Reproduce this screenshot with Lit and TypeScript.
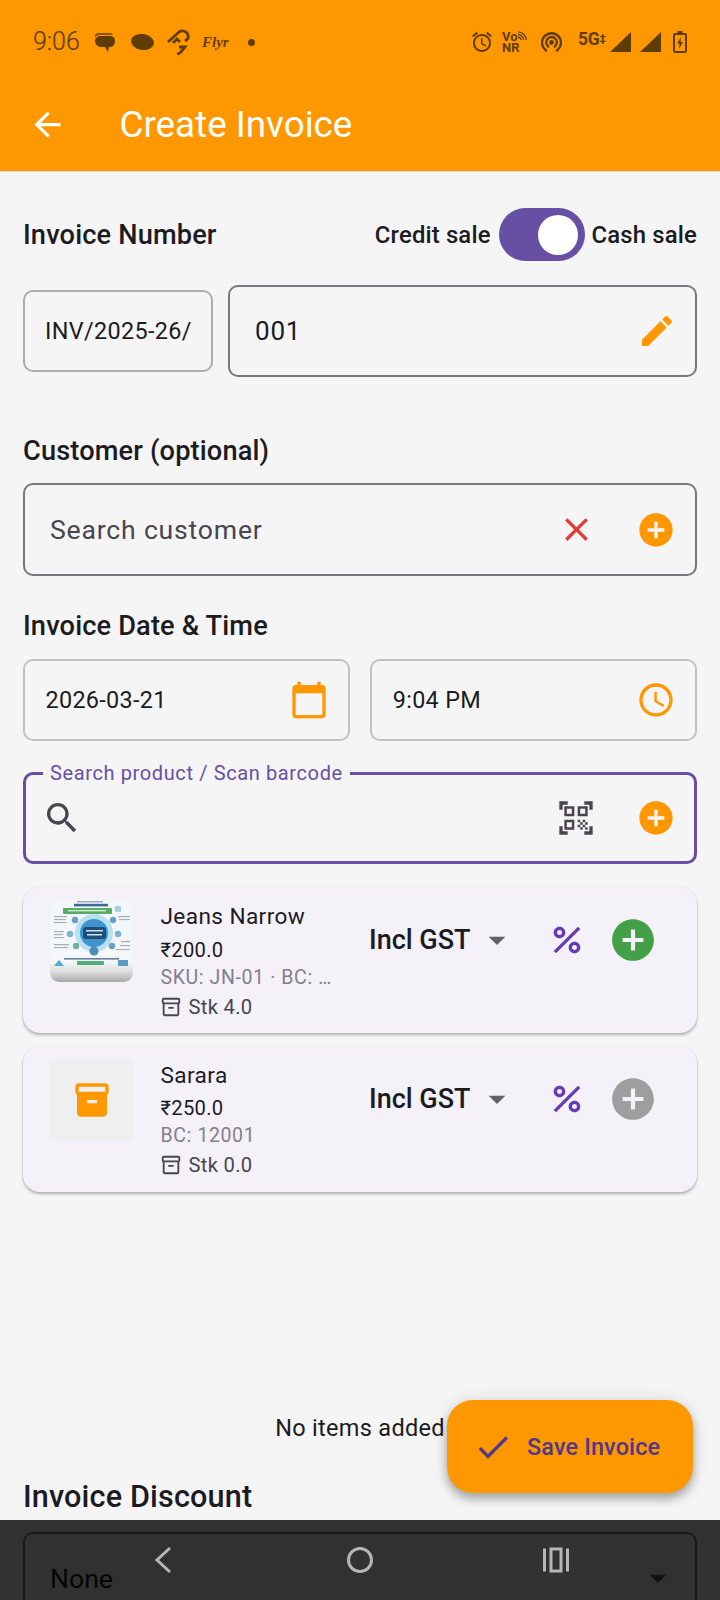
import { LitElement, html, css, svg } from "lit";
import { customElement } from "lit/decorators.js";

const P = {
  back: "M20 11H7.83l5.59-5.59L12 4l-8 8 8 8 1.41-1.41L7.83 13H20v-2z",
  edit: "M3 17.25V21h3.75L17.81 9.94l-3.75-3.75L3 17.25zM20.71 7.04a.996.996 0 0 0 0-1.41l-2.34-2.34a.996.996 0 0 0-1.41 0l-1.83 1.83 3.75 3.75 1.83-1.83z",
  close: "M19 6.41L17.59 5 12 10.59 6.41 5 5 6.41 10.59 12 5 17.59 6.41 19 12 13.41 17.59 19 19 17.59 13.41 12z",
  add: "M12 2C6.48 2 2 6.48 2 12s4.48 10 10 10 10-4.48 10-10S17.52 2 12 2zm5 11h-4v4h-2v-4H7v-2h4V7h2v4h4v2z",
  cal: "M20 3h-1V1h-2v2H7V1H5v2H4c-1.1 0-2 .9-2 2v16c0 1.1.9 2 2 2h16c1.1 0 2-.9 2-2V5c0-1.1-.9-2-2-2zm0 18H4V8h16v13z",
  clock: "M11.99 2C6.47 2 2 6.48 2 12s4.47 10 9.99 10C17.52 22 22 17.52 22 12S17.52 2 11.99 2zM12 20c-4.42 0-8-3.58-8-8s3.58-8 8-8 8 3.58 8 8-3.58 8-8 8zm.5-13H11v6l5.25 3.15.75-1.23-4.5-2.67z",
  search: "M15.5 14h-.79l-.28-.27C15.41 12.59 16 11.11 16 9.5 16 5.91 13.09 3 9.5 3S3 5.91 3 9.5 5.91 16 9.5 16c1.61 0 3.09-.59 4.23-1.57l.27.28v.79l5 4.99L20.49 19l-4.99-5zm-6 0C7.01 14 5 11.99 5 9.5S7.01 5 9.5 5 14 7.01 14 9.5 11.99 14 9.5 14z",
  qr: "M9.5 6.5v3h-3v-3h3M11 5H5v6h6V5zm-1.5 9.5v3h-3v-3h3M11 13H5v6h6v-6zm6.5-6.5v3h-3v-3h3M19 5h-6v6h6V5zm-6 8h1.5v1.5H13V13zm1.5 1.5H16V16h-1.5v-1.5zM16 13h1.5v1.5H16V13zm-3 3h1.5v1.5H13V16zm1.5 1.5H16V19h-1.5v-1.5zM16 16h1.5v1.5H16V16zm1.5-1.5H19V16h-1.5v-1.5zm0 3H19V19h-1.5v-1.5zM22 7h-2V4h-3V2h5v5zm0 15v-5h-2v3h-3v2h5zM2 22h5v-2H4v-3H2v5zM2 2v5h2V4h3V2H2z",
  boxO: "M20 2H4c-1 0-2 .9-2 2v3.01c0 .72.43 1.34 1 1.69V20c0 1.1 1.1 2 2 2h14c.9 0 2-.9 2-2V8.7c.57-.35 1-.97 1-1.69V4c0-1.1-1-2-2-2zm-1 18H5V9h14v11zm1-13H4V4h16v3zM9 12h6v2H9z",
  boxF: "M20 2H4c-1 0-2 .9-2 2v3.01c0 .72.43 1.34 1 1.69V20c0 1.1 1.1 2 2 2h14c.9 0 2-.9 2-2V8.7c.57-.35 1-.97 1-1.69V4c0-1.1-1-2-2-2zm-5 12H9v-2h6v2zm5-7H4V4h16v3z",
  pct: "M7.5 4C5.57 4 4 5.57 4 7.5S5.57 11 7.5 11 11 9.43 11 7.5 9.43 4 7.5 4zm0 5C6.67 9 6 8.33 6 7.5S6.67 6 7.5 6 9 6.67 9 7.5 8.33 9 7.5 9zm9 4c-1.93 0-3.5 1.57-3.5 3.5s1.57 3.5 3.5 3.5 3.5-1.57 3.5-3.5-1.57-3.5-3.5-3.5zm0 5c-.83 0-1.5-.67-1.5-1.5s.67-1.5 1.5-1.5 1.5.67 1.5 1.5-.67 1.5-1.5 1.5zM5.41 20L4 18.59 18.59 4 20 5.41 5.41 20z",
  drop: "M7 10l5 5 5-5z",
  check: "M9 16.17L4.83 12l-1.42 1.41L9 19 21 7l-1.41-1.41z",
  alarm: "M22 5.72l-4.6-3.86-1.29 1.53 4.6 3.86L22 5.72zM7.88 3.39L6.6 1.86 2 5.71l1.29 1.53 4.59-3.85zM12.5 8H11v6l4.75 2.85.75-1.23-4-2.37V8zM12 4c-4.97 0-9 4.03-9 9s4.03 9 9 9 9-4.03 9-9-4.03-9-9-9zm0 16c-3.87 0-7-3.13-7-7s3.13-7 7-7 7 3.13 7 7-3.13 7-7 7z",
};

const icon = (d: string, cls: string) =>
  html`<svg class="ic ${cls}" viewBox="0 0 24 24"><path d=${d}></path></svg>`;

const thumbArt = svg`
  <defs>
    <linearGradient id="tb" x1="0" y1="0" x2="0" y2="1">
      <stop offset="0" stop-color="#f4f6f7"></stop>
      <stop offset=".5" stop-color="#dcdcdc"></stop>
      <stop offset="1" stop-color="#a9a9a9"></stop>
    </linearGradient>
  </defs>
  <rect width="83" height="82" rx="9" fill="#f3f7f9"></rect>
  <path d="M0 62h83v11a9 9 0 0 1-9 9H9a9 9 0 0 1-9-9z" fill="url(#tb)"></path>
  <rect x="27" y="1" width="26" height="1.4" fill="#9aa6b4"></rect>
  <rect x="24" y="3.8" width="34" height="2.6" fill="#3a6c9c"></rect>
  <rect x="13" y="8" width="49" height="6" rx="1" fill="#58ad64"></rect>
  <rect x="18" y="10" width="38" height="1.4" fill="#cfe7d4"></rect>
  <rect x="65" y="6" width="6" height="6" fill="#a9cfde"></rect>
  <circle cx="44" cy="33" r="19" fill="#b7e0f1"></circle>
  <circle cx="44" cy="33" r="14" fill="#3d94cf"></circle>
  <rect x="33" y="27" width="23" height="12" rx="2.5" fill="#1d4f7c"></rect>
  <rect x="36" y="30" width="17" height="1.5" fill="#cfe3f2"></rect>
  <rect x="37" y="34" width="15" height="1.5" fill="#cfe3f2"></rect>
  <circle cx="25" cy="20" r="3.2" fill="#6b9fc2"></circle>
  <circle cx="63" cy="20" r="3.2" fill="#6b9fc2"></circle>
  <circle cx="20" cy="34" r="3.2" fill="#7db3d0"></circle>
  <circle cx="68" cy="34" r="3.2" fill="#7db3d0"></circle>
  <circle cx="26" cy="46" r="3.2" fill="#6fb39c"></circle>
  <circle cx="62" cy="46" r="3.2" fill="#6b9fc2"></circle>
  <circle cx="44" cy="51" r="4.5" fill="#4d8db5"></circle>
  <g fill="#a3aeb8">
    <rect x="4" y="16" width="13" height="1.2"></rect>
    <rect x="4" y="19" width="12" height="1.1"></rect>
    <rect x="4" y="22" width="13" height="1.1"></rect>
    <rect x="4" y="31" width="10" height="1.2"></rect>
    <rect x="4" y="34" width="9" height="1.1"></rect>
    <rect x="4" y="37" width="10" height="1.1"></rect>
    <rect x="4" y="44" width="15" height="1.2"></rect>
    <rect x="4" y="47" width="14" height="1.1"></rect>
    <rect x="68" y="16" width="12" height="1.2"></rect>
    <rect x="69" y="19" width="11" height="1.1"></rect>
    <rect x="71" y="41" width="9" height="1.2"></rect>
    <rect x="70" y="45" width="10" height="1.1"></rect>
    <rect x="66" y="49" width="14" height="1.1"></rect>
  </g>
  <rect x="14" y="58" width="55" height="1.6" fill="#66809b"></rect>
  <rect x="27" y="61" width="27" height="4" rx="1" fill="#52ad76"></rect>
  <path d="M4 66l5-6 5 6z" fill="#5ba8ce"></path>
  <path d="M68 66v-6h10v6z" fill="#5f9ac4"></path>
`;

@customElement("app-root")
export class AppRoot extends LitElement {
  static styles = css`
    :host {
      display: block;
      position: relative;
      width: 720px;
      height: 1600px;
      overflow: hidden;
      background: #f5f5f5;
      font-family: Roboto, "Liberation Sans", sans-serif;
      color: #1c1b1f;
    }
    .ic { display: block; fill: currentColor; flex: none; width: 40px; height: 40px; }
    .orange { color: #ff9800; }
    .header { height: 171px; background: #ff9800; box-shadow: 0 1px 1px rgba(0,0,0,.12); }
    .status { height: 84px; display: flex; align-items: center; color: #5f3d00; }
    .time { margin-left: 33px; width: 48px; font-size: 25px; line-height: 30px; white-space: nowrap; font-weight: 300; -webkit-text-stroke: .2px #5f3d00; }
    .flyr { margin-left: 11px; width: 30px; font: italic 700 15px "Liberation Serif", serif; }
    .sdot { margin-left: 16px; width: 7px; height: 7px; border-radius: 50%; background: #5f3d00; }
    .st { display: block; fill: currentColor; flex: none; }
    .bub { margin-left: 13px; width: 21px; height: 21px; }
    .blob { margin-left: 16px; width: 23px; height: 18px; }
    .logo { margin-left: 12px; width: 25px; height: 26px; fill: none; stroke: currentColor; stroke-width: 2.8; }
    .spacer { flex: 1; }
    .alarm { width: 24px; height: 24px; margin-right: 8px; }
    .vonr { position: relative; width: 24px; margin-right: 15px; font-size: 13px; font-weight: 700; line-height: 11px; }
    .vowifi { position: absolute; left: 15px; top: 0; width: 10px; height: 10px; fill: none; stroke: currentColor; stroke-width: 1.3; }
    .hot { width: 21px; height: 21px; margin-right: 16px; fill: none; stroke: currentColor; stroke-width: 2.4; stroke-linecap: round; }
    .fiveg { width: 29px; margin-right: 3px; margin-top: -6px; display: flex; align-items: center; font-size: 17.5px; line-height: 18px; font-weight: 700; white-space: nowrap; letter-spacing: -.3px; }
    .fiveg small { font-size: 11px; }
    .sig { width: 21px; height: 20px; margin-right: 9px; }
    .bat { width: 14px; height: 22px; margin-right: 33px; margin-left: 3px; }
    .toolbar { height: 81px; display: flex; align-items: center; padding-left: 27.5px; color: #fff; }
    .toolbar .ic { width: 39px; height: 39px; }
    .title { margin-left: 53px; font-size: 36.8px; line-height: 44px; white-space: nowrap; }

    .content { padding: 37px 23px 0 23px; }
    .h { font-size: 27.2px; font-weight: 500; line-height: 30px; letter-spacing: .15px; white-space: nowrap; }
    .h.big { font-size: 30.6px; }
    .numhead { display: flex; align-items: center; height: 53px; }
    .numhead .h { flex: 1; }
    .sale { font-size: 23.9px; font-weight: 500; letter-spacing: .15px; white-space: nowrap; }
    .switch { position: relative; width: 86px; height: 53px; margin: 0 7px 0 8px; border-radius: 27px; background: #6750a4; flex: none; }
    .thumb { position: absolute; top: 7px; left: 39px; width: 40px; height: 40px; border-radius: 50%; background: #fff; }
    .numrow { display: flex; align-items: center; gap: 15px; margin-top: 24px; height: 92px; }
    .box { box-sizing: border-box; border: 2px solid #79767d; border-radius: 10px; display: flex; align-items: center; }
    .light { border-color: #c2c0c5; }
    .prefix { width: 190px; height: 82px; padding-left: 20px; border-color: #aeacb1; font-size: 23.4px; letter-spacing: .35px; white-space: nowrap; }
    .number { flex: 1; height: 92px; padding: 0 18px 0 25px; font-size: 26px; letter-spacing: .8px; }
    .grow { flex: 1; margin-top: -1px; }
    .cust-h { margin-top: 59px; }
    .cust { margin-top: 17px; height: 93px; padding: 0 19px 0 25px; font-size: 26.6px; letter-spacing: .8px; color: #49454f; gap: 40px; }
    .red { color: #e53935; width: 39px; height: 39px; }
    .date-h { margin-top: 35px; }
    .dates { display: grid; grid-template-columns: 1fr 1fr; gap: 20.5px; margin-top: 18px; }
    .dt { height: 82px; padding: 0 19px 0 20.5px; font-size: 23.4px; letter-spacing: .3px; white-space: nowrap; }
    .dt .grow { margin-top: 0; }
    .searchbox { position: relative; margin-top: 31px; height: 92px; border: 3px solid #6750a4; border-radius: 10px; padding: 0 18px 0 16px; gap: 40px; color: #49454f; }
    .searchbox .grow { margin-top: 0; margin-left: -40px; }
    .flabel { position: absolute; left: 17px; top: -14px; padding: 0 7px; background: #f5f5f5; color: #6750a4; font-size: 20px; line-height: 24px; letter-spacing: .62px; white-space: nowrap; }
    .card { box-sizing: border-box; display: flex; align-items: flex-start; height: 146px; margin-top: 13px; padding: 13px 0 0 27px; border-radius: 17px; background: #f5f1f9; box-shadow: 0 2px 3px rgba(0,0,0,.28), 0 0 2px rgba(0,0,0,.06); }
    .card.first { margin-top: 23px; }
    .img { width: 83px; height: 82px; flex: none; filter: blur(.5px); display: block; }
    .ph { width: 83px; height: 80px; margin-top: 1px; flex: none; background: #efefef; display: flex; align-items: center; justify-content: center; }
    .info { width: 209px; margin-left: 27.5px; flex: none; }
    .name { font-size: 22.6px; line-height: 34px; letter-spacing: .4px; }
    .price { font-size: 20.2px; line-height: 32px; letter-spacing: .3px; color: #1c1b1f; }
    .meta { font-size: 19.5px; line-height: 24px; letter-spacing: .62px; color: #84808a; white-space: nowrap; }
    .stk { display: flex; align-items: center; height: 34px; gap: 7px; font-size: 20.2px; letter-spacing: .3px; color: #49454f; }
    .stk .ic { width: 22px; height: 22px; margin-left: -1px; }
    .card.tight .price { margin-top: -1px; }
    .ctrls { display: flex; align-items: center; height: 50px; margin-top: 15px; margin-left: -.5px; }
    .gst { font-size: 27px; font-weight: 500; white-space: nowrap; width: 107.5px; }
    .dropic { color: #616161; }
    .pcic { color: #673ab7; margin-left: 30px; }
    .addbig { width: 50px; height: 50px; margin-left: 21px; }
    .green { color: #43a047; }
    .gray { color: #9e9e9e; }
    .noitems { margin-top: 221px; text-align: center; font-size: 23.5px; line-height: 30px; letter-spacing: .3px; }
    .disc-h { margin-top: 39px; }
    .discbox { margin-top: 20px; height: 92px; padding: 0 17px 0 25px; font-size: 26.6px; }
    .discbox .grow { margin-top: 0; }
    .fab { position: absolute; left: 447px; top: 1400px; width: 246px; height: 93px; box-sizing: border-box; padding-left: 26px; display: flex; align-items: center; gap: 14px; border-radius: 26px; background: #ff9800; color: #4f378b; font-size: 23.4px; font-weight: 500; letter-spacing: .15px; box-shadow: 0 6px 10px rgba(0,0,0,.28), 0 1px 18px rgba(0,0,0,.12); white-space: nowrap; }
    .nav { position: absolute; left: 0; right: 0; top: 1520px; height: 80px; background: rgba(0,0,0,.8); color: #b5b5b5; }
    .nav svg { position: absolute; fill: none; stroke: currentColor; stroke-width: 3; }
    .nb { left: 150px; top: 25px; width: 26px; height: 30px; }
    .nh { left: 345px; top: 25px; width: 30px; height: 30px; }
    .nr { left: 541px; top: 25px; width: 30px; height: 30px; }
  `;

  private product(cls: string, name: string, price: string, meta: string, stk: string, addCls: string, media: unknown) {
    return html`<div class="card ${cls}">
      ${media}
      <div class="info">
        <div class="name">${name}</div>
        <div class="price">${price}</div>
        <div class="meta">${meta}</div>
        <div class="stk">${icon(P.boxO, "")}<span>${stk}</span></div>
      </div>
      <div class="ctrls">
        <span class="gst">Incl GST</span>
        ${icon(P.drop, "dropic")}
        ${icon(P.pct, "pcic")}
        ${icon(P.add, "addbig " + addCls)}
      </div>
    </div>`;
  }

  render() {
    return html`
      <div class="header">
        <div class="status">
          <span class="time">9:06</span>
          <svg class="st bub" viewBox="0 0 21 21"><path d="M4 1h12a4 4 0 0 1 3 2H7C3 3 1 5 1 7V4a3 3 0 0 1 3-3z" opacity=".75"></path><path d="M7 4h9c3 0 5 2 5 5s-2 6-5 6h-1l-1 5-3-5H7c-3 0-6-3-6-6s3-5 6-5z"></path></svg>
          <svg class="st blob" viewBox="0 0 23 18"><ellipse cx="11.5" cy="9" rx="11.5" ry="8" transform="rotate(8 11.5 9)"></ellipse></svg>
          <svg class="st logo" viewBox="0 0 25 26"><path d="M2 13 13 3c3-2 8-1 9 3 1 3-1 5-3 6M7 14l4-4 3 3M13 18h6l-5 6M11 25l3-1"></path></svg>
          <span class="flyr">Flyr</span>
          <span class="sdot"></span>
          <span class="spacer"></span>
          <svg class="st alarm" viewBox="0 0 24 24"><path d=${P.alarm}></path></svg>
          <span class="vonr">Vo NR<svg class="vowifi" viewBox="0 0 10 10"><path d="M1 3.5c3 0 5.5 2.500 5.500 5.500M1 .8c4.500 0 8.200 3.700 8.200 8.200M1 6.200c1.500 0 2.800 1.300 2.800 2.800"></path></svg></span>
          <svg class="st hot" viewBox="0 0 21 21"><path d="M5 18.5a9.500 9.500 0 1 1 11 0M7.200 14.500a5.300 5.300 0 1 1 6.600 0"></path><circle cx="10.500" cy="10.500" r="1.200" fill="currentColor"></circle></svg>
          <span class="fiveg">5G<small>‡</small></span>
          <svg class="st sig" viewBox="0 0 21 20"><path d="M21 0v20H0z"></path></svg>
          <svg class="st sig" viewBox="0 0 21 20"><path d="M21 0v20H0z"></path></svg>
          <svg class="st bat" viewBox="0 0 14 22"><path fill-rule="evenodd" d="M4.500 0h5v2H12a2 2 0 0 1 2 2v16a2 2 0 0 1-2 2H2a2 2 0 0 1-2-2V4a2 2 0 0 1 2-2h2.500zM2 4v16h10V4zM8 6 4 12.500h2.500L6 18l4-7H7.500z"></path></svg>
        </div>
        <div class="toolbar">
          ${icon(P.back, "")}
          <span class="title">Create Invoice</span>
        </div>
      </div>

      <div class="content">
        <div class="numhead">
          <span class="h">Invoice Number</span>
          <span class="sale">Credit sale</span>
          <span class="switch"><span class="thumb"></span></span>
          <span class="sale">Cash sale</span>
        </div>
        <div class="numrow">
          <div class="box prefix">INV/2025-26/</div>
          <div class="box number"><span class="grow">001</span>${icon(P.edit, "orange")}</div>
        </div>

        <div class="h cust-h">Customer (optional)</div>
        <div class="box cust">
          <span class="grow">Search customer</span>
          ${icon(P.close, "red")}
          ${icon(P.add, "orange")}
        </div>

        <div class="h date-h">Invoice Date &amp; Time</div>
        <div class="dates">
          <div class="box light dt"><span class="grow">2026-03-21</span>${icon(P.cal, "orange")}</div>
          <div class="box light dt"><span class="grow">9:04 PM</span>${icon(P.clock, "orange")}</div>
        </div>

        <div class="box searchbox">
          <span class="flabel">Search product / Scan barcode</span>
          ${icon(P.search, "")}
          <span class="grow"></span>
          ${icon(P.qr, "")}
          ${icon(P.add, "orange")}
        </div>

        ${this.product("first", "Jeans Narrow", "₹200.0", "SKU: JN-01 · BC: …", "Stk 4.0", "green",
          html`<svg class="img" viewBox="0 0 83 82">${thumbArt}</svg>`)}
        ${this.product("tight", "Sarara", "₹250.0", "BC: 12001", "Stk 0.0", "gray",
          html`<div class="ph">${icon(P.boxF, "orange")}</div>`)}

        <div class="noitems">No items added</div>
        <div class="h big disc-h">Invoice Discount</div>
        <div class="box discbox"><span class="grow">None</span>${icon(P.drop, "dropic")}</div>
      </div>

      <div class="fab">${icon(P.check, "")}<span>Save Invoice</span></div>

      <div class="nav">
        <svg class="nb" viewBox="0 0 26 30"><path d="M20 3 7 15l13 12"></path></svg>
        <svg class="nh" viewBox="0 0 30 30"><circle cx="15" cy="15" r="11.5"></circle></svg>
        <svg class="nr" viewBox="0 0 30 30"><path d="M3.5 3.500v23M26.500 3.500v23M10 4h10v22H10z"></path></svg>
      </div>
    `;
  }
}
